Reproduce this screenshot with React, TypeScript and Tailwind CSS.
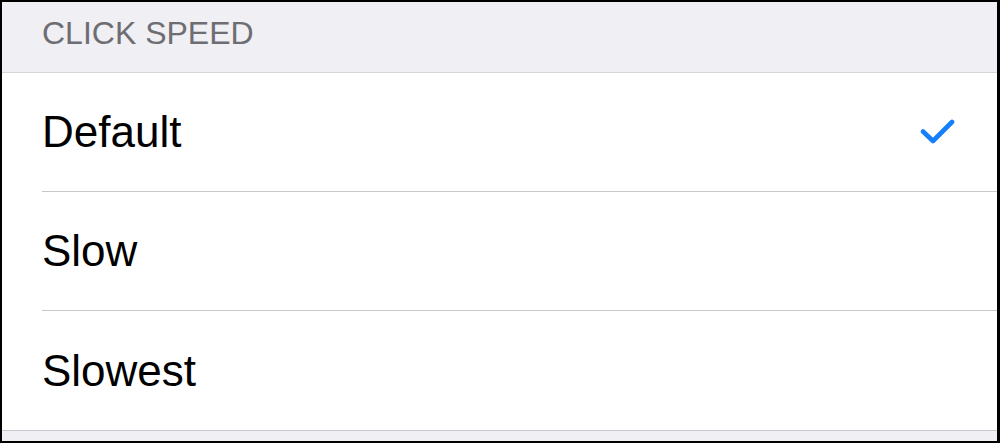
const rows = [
  { label: "Default", selected: true },
  { label: "Slow", selected: false },
  { label: "Slowest", selected: false },
];

const Check = () => (
  <svg width="36" height="28" viewBox="0 0 36 28" fill="none">
    <path
      d="M3 13.5 L13 23 L32 4"
      stroke="#147efb"
      strokeWidth="4.6"
      strokeLinecap="round"
      strokeLinejoin="round"
    />
  </svg>
);

export default function App() {
  return (
    <div
      className="w-[1000px] h-[443px] bg-black pt-[2px] pl-[2px] pr-[3px] pb-[2px]"
      style={{ fontFamily: '"Liberation Sans", Arial, sans-serif' }}
    >
      <div className="flex h-full flex-col bg-[#efeff4]">
        <div className="h-[71px] shrink-0 border-b border-[#d6d6da] pl-[40px] pt-[15px]">
          <span className="text-[32px] leading-none text-[#6d6d72]">CLICK SPEED</span>
        </div>
        <div className="bg-white">
          {rows.map((row, i) => (
            <div
              key={row.label}
              className={
                i === rows.length - 1
                  ? "flex h-[120px] border-b border-[#c8c7cc] pl-[40px]"
                  : "flex h-[119px] pl-[40px]"
              }
            >
              <div
                className={
                  i === rows.length - 1
                    ? "flex flex-1 items-center justify-between pr-[41px]"
                    : "flex flex-1 items-center justify-between border-b border-[#c8c7cc] pr-[41px]"
                }
              >
                <span className="text-[44px] leading-none text-black">{row.label}</span>
                {row.selected && <Check />}
              </div>
            </div>
          ))}
        </div>
      </div>
    </div>
  );
}
